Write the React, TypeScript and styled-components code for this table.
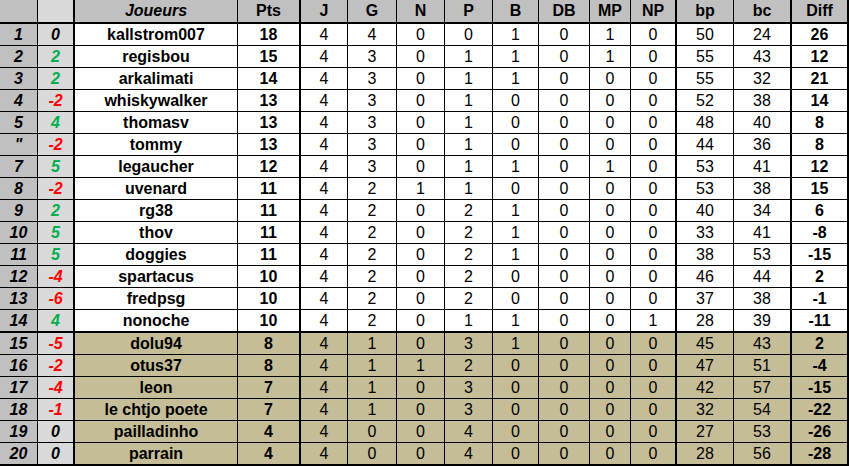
import React from "react";
import styled, { createGlobalStyle } from "styled-components";

const GlobalStyle = createGlobalStyle`
  html, body {
    margin: 0;
    padding: 0;
    background: #ffffff;
  }
  body {
    font-family: "Liberation Sans", Arial, sans-serif;
  }
`;

const WIDTHS = [38, 37, 163, 63, 47, 49, 48, 48, 46, 51, 41, 46, 57, 58, 57];
const THICK = [false, true, false, true, false, false, false, false, false, false, false, true, false, true, true];
const HEADERS = ["", "", "Joueurs", "Pts", "J", "G", "N", "P", "B", "DB", "MP", "NP", "bp", "bc", "Diff"];

const GRAY = "#c0c0c0";
const LIGHT = "#d9d9d9";
const TAN = "#c4bd97";

type Player = {
  rank: string;
  move: number;
  name: string;
  stats: number[];
};

const rows: [string, number, string, ...number[]][] = [
  ["1", 0, "kallstrom007", 18, 4, 4, 0, 0, 1, 0, 1, 0, 50, 24, 26],
  ["2", 2, "regisbou", 15, 4, 3, 0, 1, 1, 0, 1, 0, 55, 43, 12],
  ["3", 2, "arkalimati", 14, 4, 3, 0, 1, 1, 0, 0, 0, 55, 32, 21],
  ["4", -2, "whiskywalker", 13, 4, 3, 0, 1, 0, 0, 0, 0, 52, 38, 14],
  ["5", 4, "thomasv", 13, 4, 3, 0, 1, 0, 0, 0, 0, 48, 40, 8],
  ["\"", -2, "tommy", 13, 4, 3, 0, 1, 0, 0, 0, 0, 44, 36, 8],
  ["7", 5, "legaucher", 12, 4, 3, 0, 1, 1, 0, 1, 0, 53, 41, 12],
  ["8", -2, "uvenard", 11, 4, 2, 1, 1, 0, 0, 0, 0, 53, 38, 15],
  ["9", 2, "rg38", 11, 4, 2, 0, 2, 1, 0, 0, 0, 40, 34, 6],
  ["10", 5, "thov", 11, 4, 2, 0, 2, 1, 0, 0, 0, 33, 41, -8],
  ["11", 5, "doggies", 11, 4, 2, 0, 2, 1, 0, 0, 0, 38, 53, -15],
  ["12", -4, "spartacus", 10, 4, 2, 0, 2, 0, 0, 0, 0, 46, 44, 2],
  ["13", -6, "fredpsg", 10, 4, 2, 0, 2, 0, 0, 0, 0, 37, 38, -1],
  ["14", 4, "nonoche", 10, 4, 2, 0, 1, 1, 0, 0, 1, 28, 39, -11],
  ["15", -5, "dolu94", 8, 4, 1, 0, 3, 1, 0, 0, 0, 45, 43, 2],
  ["16", -2, "otus37", 8, 4, 1, 1, 2, 0, 0, 0, 0, 47, 51, -4],
  ["17", -4, "leon", 7, 4, 1, 0, 3, 0, 0, 0, 0, 42, 57, -15],
  ["18", -1, "le chtjo poete", 7, 4, 1, 0, 3, 0, 0, 0, 0, 32, 54, -22],
  ["19", 0, "pailladinho", 4, 4, 0, 0, 4, 0, 0, 0, 0, 27, 53, -26],
  ["20", 0, "parrain", 4, 4, 0, 0, 4, 0, 0, 0, 0, 28, 56, -28],
];

const players: Player[] = rows.map(([rank, move, name, ...stats]) => ({
  rank,
  move,
  name,
  stats: stats as number[],
}));

const Table = styled.div`
  width: 849px;
  display: flex;
  flex-direction: column;
`;

const Row = styled.div<{ $height: number; $thickBottom?: boolean }>`
  display: grid;
  grid-template-columns: ${WIDTHS.map((w) => `${w}px`).join(" ")};
  height: ${(p) => p.$height}px;
  box-sizing: border-box;
  border-bottom: ${(p) => (p.$thickBottom ? 2 : 1)}px solid #000;
`;

const Cell = styled.div<{
  $thick?: boolean;
  $bg: string;
  $bold?: boolean;
  $italic?: boolean;
  $color?: string;
}>`
  box-sizing: border-box;
  border-right: ${(p) => (p.$thick ? 2 : 1)}px solid #000;
  background: ${(p) => p.$bg};
  color: ${(p) => p.$color || "#000"};
  font-size: 16px;
  font-weight: ${(p) => (p.$bold ? 700 : 400)};
  font-style: ${(p) => (p.$italic ? "italic" : "normal")};
  display: flex;
  align-items: center;
  justify-content: center;
  white-space: nowrap;
  overflow: hidden;
`;

const moveColor = (m: number) => (m > 0 ? "#00b050" : m < 0 ? "#ff0000" : "#000");

export default function App() {
  return (
    <>
      <GlobalStyle />
      <Table>
        <Row $height={24} $thickBottom>
          {HEADERS.map((h, i) => (
            <Cell
              key={i}
              $thick={THICK[i]}
              $bg={i === 1 ? LIGHT : GRAY}
              $bold
              $italic={i === 2}
            >
              {h}
            </Cell>
          ))}
        </Row>
        {players.map((p, r) => {
          const zone = r >= 14;
          const bg = zone ? TAN : "#ffffff";
          const thickBottom = r === 13 || r === 19;
          return (
            <Row key={r} $height={thickBottom ? 23 : 22} $thickBottom={thickBottom}>
              <Cell $thick={THICK[0]} $bg={GRAY} $bold $italic>
                {p.rank}
              </Cell>
              <Cell $thick={THICK[1]} $bg={LIGHT} $bold $italic $color={moveColor(p.move)}>
                {p.move}
              </Cell>
              <Cell $thick={THICK[2]} $bg={bg} $bold>
                {p.name}
              </Cell>
              {p.stats.map((v, i) => {
                const col = i + 3;
                const bold = col === 3 || col === 14;
                return (
                  <Cell key={col} $thick={THICK[col]} $bg={bg} $bold={bold}>
                    {v}
                  </Cell>
                );
              })}
            </Row>
          );
        })}
      </Table>
    </>
  );
}
